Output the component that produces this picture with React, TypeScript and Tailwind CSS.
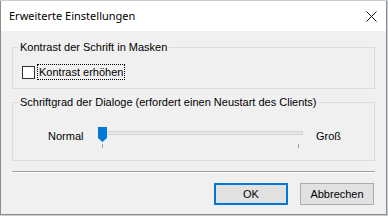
const TITLE_FONT = { fontFamily: '"Noto Sans", "Segoe UI", sans-serif' };
const BODY_FONT = { fontFamily: '"Liberation Sans", Arial, sans-serif' };

function GroupBox({ title, className, children }: { title: string; className: string; children: React.ReactNode }) {
  return (
    <div className={`relative border border-[#dcdcdc] ${className}`}>
      <span className="absolute left-[5px] top-[-9px] bg-[#f0f0f0] px-[2px] text-[11px] leading-[16px] text-black">
        {title}
      </span>
      {children}
    </div>
  );
}

export default function App() {
  return (
    <div className="h-[216px] w-[388px] overflow-hidden bg-[#c9ccd2] pt-px" style={BODY_FONT}>
      <div className="flex h-[214px] w-[387px] flex-col border-x border-b border-[#8c8c8c] bg-[#f0f0f0]">
        <div className="flex h-[30px] shrink-0 items-center justify-between bg-white pl-[8px] pr-[9px]">
          <span className="text-[11px] text-black" style={TITLE_FONT}>
            Erweiterte Einstellungen
          </span>
          <svg width="11" height="11" viewBox="0 0 11 11" className="mt-[1px]">
            <path d="M0.5 0.5L10.5 10.5M10.5 0.5L0.5 10.5" stroke="#111" strokeWidth="1" />
          </svg>
        </div>

        <div className="flex flex-col px-[11px]">
          <GroupBox title="Kontrast der Schrift in Masken" className="mt-[16px] h-[42px]">
            <div className="ml-[9px] mt-[16px] flex items-center">
              <div className="h-[13px] w-[13px] border border-[#333] bg-white" />
              <span className="ml-[2px] border border-dotted border-black px-[1px] text-[11px] leading-[14px] text-black">
                Kontrast erhöhen
              </span>
            </div>
          </GroupBox>

          <GroupBox
            title="Schriftgrad der Dialoge (erfordert einen Neustart des Clients)"
            className="mt-[13px] h-[59px]"
          >
            <div className="ml-[35px] mt-[24px] flex items-start">
              <span className="mt-[1px] w-[50px] text-[11px] leading-[16px] text-black">Normal</span>
              <div className="relative h-[22px] w-[210px]">
                <div className="absolute left-[5px] right-[5px] top-[4px] h-[4px] border border-[#d6d6d6] bg-[#e7e7e7]" />
                <svg width="9" height="15" viewBox="0 0 9 15" className="absolute left-0 top-0">
                  <path d="M0 0H9V11L4.5 15L0 11Z" fill="#0078d7" />
                </svg>
                <div className="absolute left-[4px] top-[17px] h-[4px] w-px bg-[#a0a0a0]" />
                <div className="absolute left-[200px] top-[17px] h-[4px] w-px bg-[#a0a0a0]" />
              </div>
              <span className="ml-[8px] mt-[1px] text-[11px] leading-[16px] text-black">Groß</span>
            </div>
          </GroupBox>

          <div className="mt-[10px] h-px bg-[#a0a0a0]" />
          <div className="h-px bg-white" />

          <div className="mt-[10px] flex justify-end gap-[12px] pr-[1px]">
            <button className="flex h-[22px] w-[74px] items-center justify-center border-2 border-[#0078d7] bg-[#e1e1e1] text-[11px] text-black">
              OK
            </button>
            <button className="flex h-[22px] w-[74px] items-center justify-center border border-[#adadad] bg-[#e1e1e1] text-[11px] text-black">
              Abbrechen
            </button>
          </div>
        </div>
      </div>
    </div>
  );
}
